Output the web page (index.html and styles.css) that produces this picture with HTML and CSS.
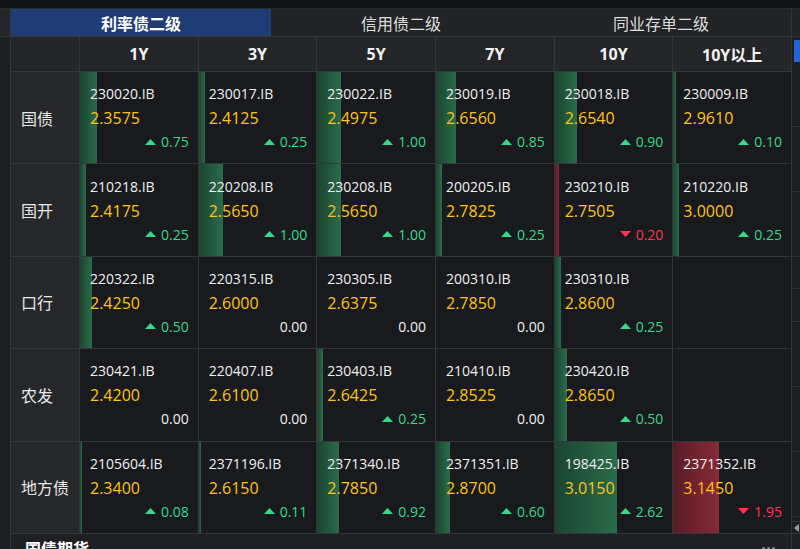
FILE: index.html
```html
<!DOCTYPE html>
<html lang="zh">
<head>
<meta charset="utf-8">
<title>利率债二级</title>
<link rel="stylesheet" href="styles.css">
</head>
<body>
<div class="topband"></div>
<div class="app">
  <div class="side-left">
    <div class="side-left-top"></div>
    <div class="side-left-body"></div>
  </div>
  <div class="main">
    <div class="tabs">
      <div class="tab active">利率债二级</div>
      <div class="tab">信用债二级</div>
      <div class="tab">同业存单二级</div>
    </div>
    <div class="grid">
      <div class="hd corner"></div>
      <div class="hd">1Y</div>
      <div class="hd">3Y</div>
      <div class="hd">5Y</div>
      <div class="hd">7Y</div>
      <div class="hd">10Y</div>
      <div class="hd">10Y以上</div>

      <div class="label">国债</div>
      <div class="cell" style="--w:17px"><div class="code">230020.IB</div><div class="val">2.3575</div><div class="chg up"><svg width="11" height="6" viewBox="0 0 11 6"><polygon points="0,6 5.5,0 11,6"/></svg>0.75</div></div>
      <div class="cell" style="--w:6px"><div class="code">230017.IB</div><div class="val">2.4125</div><div class="chg up"><svg width="11" height="6" viewBox="0 0 11 6"><polygon points="0,6 5.5,0 11,6"/></svg>0.25</div></div>
      <div class="cell" style="--w:24px"><div class="code">230022.IB</div><div class="val">2.4975</div><div class="chg up"><svg width="11" height="6" viewBox="0 0 11 6"><polygon points="0,6 5.5,0 11,6"/></svg>1.00</div></div>
      <div class="cell" style="--w:20px"><div class="code">230019.IB</div><div class="val">2.6560</div><div class="chg up"><svg width="11" height="6" viewBox="0 0 11 6"><polygon points="0,6 5.5,0 11,6"/></svg>0.85</div></div>
      <div class="cell" style="--w:22px"><div class="code">230018.IB</div><div class="val">2.6540</div><div class="chg up"><svg width="11" height="6" viewBox="0 0 11 6"><polygon points="0,6 5.5,0 11,6"/></svg>0.90</div></div>
      <div class="cell" style="--w:3px"><div class="code">230009.IB</div><div class="val">2.9610</div><div class="chg up"><svg width="11" height="6" viewBox="0 0 11 6"><polygon points="0,6 5.5,0 11,6"/></svg>0.10</div></div>

      <div class="label">国开</div>
      <div class="cell" style="--w:6px"><div class="code">210218.IB</div><div class="val">2.4175</div><div class="chg up"><svg width="11" height="6" viewBox="0 0 11 6"><polygon points="0,6 5.5,0 11,6"/></svg>0.25</div></div>
      <div class="cell" style="--w:24px"><div class="code">220208.IB</div><div class="val">2.5650</div><div class="chg up"><svg width="11" height="6" viewBox="0 0 11 6"><polygon points="0,6 5.5,0 11,6"/></svg>1.00</div></div>
      <div class="cell" style="--w:24px"><div class="code">230208.IB</div><div class="val">2.5650</div><div class="chg up"><svg width="11" height="6" viewBox="0 0 11 6"><polygon points="0,6 5.5,0 11,6"/></svg>1.00</div></div>
      <div class="cell" style="--w:6px"><div class="code">200205.IB</div><div class="val">2.7825</div><div class="chg up"><svg width="11" height="6" viewBox="0 0 11 6"><polygon points="0,6 5.5,0 11,6"/></svg>0.25</div></div>
      <div class="cell dn" style="--w:4px"><div class="code">230210.IB</div><div class="val">2.7505</div><div class="chg down"><svg width="11" height="6" viewBox="0 0 11 6"><polygon points="0,0 11,0 5.5,6"/></svg>0.20</div></div>
      <div class="cell" style="--w:6px"><div class="code">210220.IB</div><div class="val">3.0000</div><div class="chg up"><svg width="11" height="6" viewBox="0 0 11 6"><polygon points="0,6 5.5,0 11,6"/></svg>0.25</div></div>

      <div class="label">口行</div>
      <div class="cell" style="--w:12px"><div class="code">220322.IB</div><div class="val">2.4250</div><div class="chg up"><svg width="11" height="6" viewBox="0 0 11 6"><polygon points="0,6 5.5,0 11,6"/></svg>0.50</div></div>
      <div class="cell"><div class="code">220315.IB</div><div class="val">2.6000</div><div class="chg">0.00</div></div>
      <div class="cell"><div class="code">230305.IB</div><div class="val">2.6375</div><div class="chg">0.00</div></div>
      <div class="cell"><div class="code">200310.IB</div><div class="val">2.7850</div><div class="chg">0.00</div></div>
      <div class="cell" style="--w:6px"><div class="code">230310.IB</div><div class="val">2.8600</div><div class="chg up"><svg width="11" height="6" viewBox="0 0 11 6"><polygon points="0,6 5.5,0 11,6"/></svg>0.25</div></div>
      <div class="cell"></div>

      <div class="label">农发</div>
      <div class="cell"><div class="code">230421.IB</div><div class="val">2.4200</div><div class="chg">0.00</div></div>
      <div class="cell"><div class="code">220407.IB</div><div class="val">2.6100</div><div class="chg">0.00</div></div>
      <div class="cell" style="--w:6px"><div class="code">230403.IB</div><div class="val">2.6425</div><div class="chg up"><svg width="11" height="6" viewBox="0 0 11 6"><polygon points="0,6 5.5,0 11,6"/></svg>0.25</div></div>
      <div class="cell"><div class="code">210410.IB</div><div class="val">2.8525</div><div class="chg">0.00</div></div>
      <div class="cell" style="--w:12px"><div class="code">230420.IB</div><div class="val">2.8650</div><div class="chg up"><svg width="11" height="6" viewBox="0 0 11 6"><polygon points="0,6 5.5,0 11,6"/></svg>0.50</div></div>
      <div class="cell"></div>

      <div class="label">地方债</div>
      <div class="cell" style="--w:2px"><div class="code">2105604.IB</div><div class="val">2.3400</div><div class="chg up"><svg width="11" height="6" viewBox="0 0 11 6"><polygon points="0,6 5.5,0 11,6"/></svg>0.08</div></div>
      <div class="cell" style="--w:2px"><div class="code">2371196.IB</div><div class="val">2.6150</div><div class="chg up"><svg width="11" height="6" viewBox="0 0 11 6"><polygon points="0,6 5.5,0 11,6"/></svg>0.11</div></div>
      <div class="cell" style="--w:22px"><div class="code">2371340.IB</div><div class="val">2.7850</div><div class="chg up"><svg width="11" height="6" viewBox="0 0 11 6"><polygon points="0,6 5.5,0 11,6"/></svg>0.92</div></div>
      <div class="cell" style="--w:14px"><div class="code">2371351.IB</div><div class="val">2.8700</div><div class="chg up"><svg width="11" height="6" viewBox="0 0 11 6"><polygon points="0,6 5.5,0 11,6"/></svg>0.60</div></div>
      <div class="cell" style="--w:62px"><div class="code">198425.IB</div><div class="val">3.0150</div><div class="chg up"><svg width="11" height="6" viewBox="0 0 11 6"><polygon points="0,6 5.5,0 11,6"/></svg>2.62</div></div>
      <div class="cell dn" style="--w:46px"><div class="code">2371352.IB</div><div class="val">3.1450</div><div class="chg down"><svg width="11" height="6" viewBox="0 0 11 6"><polygon points="0,0 11,0 5.5,6"/></svg>1.95</div></div>
    </div>
    <div class="section">
      <div class="section-title">国债期货</div>
      <div class="dots"><span></span><span></span><span></span></div>
    </div>
  </div>
  <div class="side-right">
    <div class="side-right-top"></div>
    <div class="thumb"></div>
    <div class="side-right-body"></div>
    <div class="arrow"></div>
    <div class="side-right-bottom"></div>
  </div>
</div>
</body>
</html>
```
FILE: styles.css
```css
* { box-sizing: border-box; }
html, body { margin: 0; padding: 0; }
body {
  width: 800px;
  height: 549px;
  overflow: hidden;
  background: #1c1d21;
  font-family: "Open Sans", "Noto Sans CJK SC", sans-serif;
  color: #ececec;
}
.topband {
  height: 9px;
  background: #131417;
  border-bottom: 1px solid #2a2b2f;
}
.app {
  display: flex;
  height: 540px;
}
.side-left {
  width: 11px;
  border-right: 1px solid #34363a;
  display: flex;
  flex-direction: column;
}
.side-left-top {
  height: 28px;
  background: #25262a;
  border-bottom: 1px solid #34363a;
}
.side-left-body {
  flex: 1;
  background: #1d1e22;
}
.main {
  width: 780px;
  display: flex;
  flex-direction: column;
  min-height: 0;
}
.tabs {
  display: flex;
  flex-shrink: 0;
  height: 28px;
  background: #222327;
  border-bottom: 1px solid #36383c;
}
.tab {
  flex: 1;
  display: flex;
  align-items: center;
  justify-content: center;
  font-family: "Noto Sans CJK SC", sans-serif;
  font-size: 16px;
  color: #dedede;
}
.tab.active {
  background: #1f3d74;
  color: #ffffff;
  font-weight: 700;
}
.grid {
  display: grid;
  flex-shrink: 0;
  grid-template-columns: 68px repeat(6, 1fr);
  grid-template-rows: 34px repeat(5, 1fr);
  gap: 1px;
  height: 497px;
  background: #34363a;
  border-bottom: 1px solid #34363a;
}
.hd {
  background: #242529;
  display: flex;
  align-items: center;
  justify-content: center;
  font-weight: 700;
  font-size: 16px;
  color: #f2f2f2;
  font-family: "Open Sans", "Noto Sans CJK SC", sans-serif;
}
.label {
  background: #26272b;
  display: flex;
  align-items: center;
  padding-left: 10px;
  font-family: "Noto Sans CJK SC", sans-serif;
  font-size: 16px;
  color: #e8e8e8;
}
.cell {
  --w: 0px;
  background: linear-gradient(90deg, #1b4430, #2a6c49) no-repeat left top / var(--w) 100%, #181a1e;
  display: flex;
  flex-direction: column;
  justify-content: center;
  padding: 0 9px 0 10px;
}
.cell.dn {
  background: linear-gradient(90deg, #5a1c27, #872a37) no-repeat left top / var(--w) 100%, #181a1e;
}
.code {
  font-size: 14px;
  line-height: 19px;
  color: #f0f0f0;
}
.val {
  font-size: 16px;
  line-height: 22px;
  margin-top: 4px;
  color: #ffc21a;
}
.chg {
  font-size: 14px;
  line-height: 19px;
  margin-top: 3px;
  display: flex;
  align-items: center;
  justify-content: flex-end;
  gap: 5px;
  color: #f0f0f0;
}
.chg svg { display: block; }
.chg.up { color: #36d98a; }
.chg.up svg { fill: #36d98a; }
.chg.down { color: #ff3550; }
.chg.down svg { fill: #ff3550; }
.section {
  flex: 1;
  min-height: 0;
  overflow: hidden;
  display: flex;
  align-items: flex-start;
  justify-content: space-between;
  padding: 3px 16px 0 14px;
  background: #1f2024;
}
.section-title {
  font-family: "Noto Sans CJK SC", sans-serif;
  font-weight: 700;
  font-size: 16px;
  line-height: 22px;
  color: #ffffff;
}
.dots {
  display: flex;
  gap: 2px;
  padding-top: 10px;
}
.dots span {
  width: 3px;
  height: 3px;
  background: #8a8b8f;
  border-radius: 50%;
}
.side-right {
  flex: 1;
  border-left: 1px solid #34363a;
  display: flex;
  flex-direction: column;
  background: #1d1e22;
}
.side-right-top {
  height: 28px;
  flex-shrink: 0;
  background: #222327;
  border-bottom: 1px solid #34363a;
}
.thumb {
  height: 22px;
  width: 6px;
  flex-shrink: 0;
  margin: 3px 0 0 2px;
  background: #2563d9;
  border-radius: 1px;
}
.side-right-body {
  flex: 1;
  background: repeating-linear-gradient(180deg, #1d1e22 0, #1d1e22 31.5px, #2e3034 31.5px, #2e3034 32.5px);
}
.arrow {
  height: 13px;
  flex-shrink: 0;
  border-top: 1px solid #34363a;
  border-bottom: 1px solid #34363a;
  display: flex;
  align-items: center;
  padding-left: 2px;
}
.arrow::before {
  content: "";
  border-right: 5px solid #9a9b9f;
  border-top: 4px solid transparent;
  border-bottom: 4px solid transparent;
}
.side-right-bottom {
  height: 15px;
  flex-shrink: 0;
  background: #1f2024;
}
```
